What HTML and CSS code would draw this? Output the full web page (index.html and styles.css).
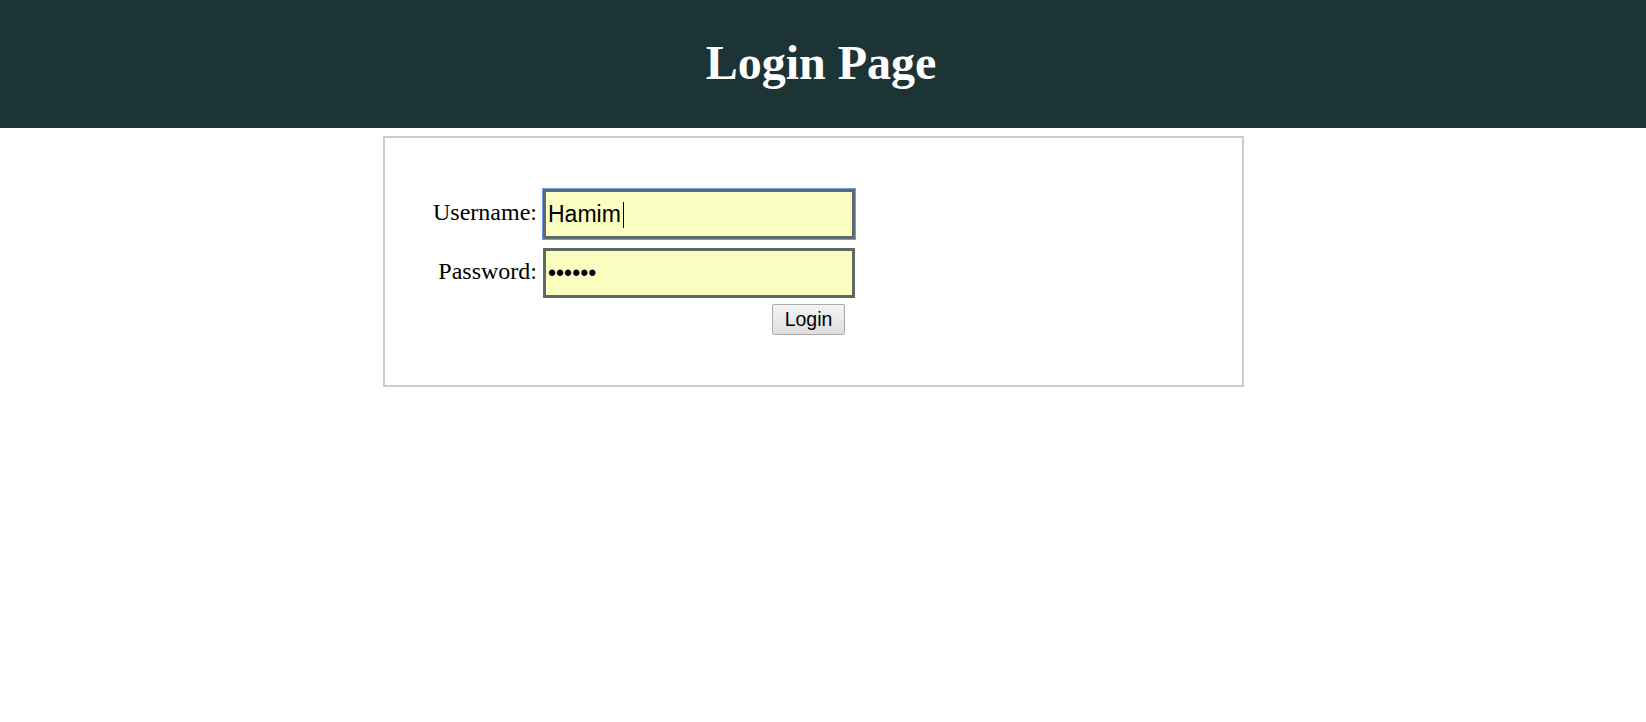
FILE: index.html
```html
<!DOCTYPE html>
<html lang="en">
<head>
<meta charset="utf-8">
<title>Login Page</title>
<link rel="stylesheet" href="styles.css">
</head>
<body>
<header class="site-header">
  <h1 class="site-title">Login Page</h1>
</header>
<main class="login-box">
  <form class="login-form" onsubmit="return false;">
    <label class="field-label" for="username">Username:</label>
    <span class="input-wrap">
      <input class="field-input field-input--focused" id="username" type="text" value="Hamim">
      <span class="fake-caret"></span>
    </span>
    <label class="field-label" for="password">Password:</label>
    <input class="field-input" id="password" type="password" value="123456">
    <div class="actions">
      <button class="login-button" type="submit">Login</button>
    </div>
  </form>
</main>
</body>
</html>
```

FILE: styles.css
```css
html, body {
  margin: 0;
  padding: 0;
  background: #ffffff;
}

body {
  font-family: "Liberation Serif", "Times New Roman", serif;
  color: #000;
}

.site-header {
  box-sizing: border-box;
  height: 128px;
  padding: 0 4px 4px 0;
  background: #1c3435;
  display: flex;
  align-items: center;
  justify-content: center;
}

.site-title {
  margin: 0;
  font-family: "Liberation Serif", "Times New Roman", serif;
  font-weight: bold;
  font-size: 48px;
  color: #ffffff;
}

.login-box {
  box-sizing: border-box;
  width: 861px;
  margin: 8px 0 0 calc(50% - 440px);
  padding: 51px 50px 50px 50px;
  border: 2px solid #cccccc;
}

.login-form {
  display: grid;
  grid-template-columns: 102px 312px;
  column-gap: 6px;
  row-gap: 9px;
  align-items: center;
}

.field-label {
  justify-self: end;
  padding-bottom: 4px;
  font-size: 24px;
  line-height: 26px;
  white-space: nowrap;
}

.input-wrap {
  position: relative;
  display: block;
  width: 312px;
  height: 50px;
}

.field-input {
  box-sizing: border-box;
  display: block;
  width: 312px;
  height: 50px;
  margin: 0;
  padding: 0 2px;
  border: 3px solid #5d6a62;
  background: #fafec0;
  font-family: "Liberation Sans", Arial, sans-serif;
  font-size: 23px;
  color: #000;
  outline: none;
  border-radius: 0;
}

.field-input--focused {
  border-color: #5b6a6e;
  box-shadow: 0 0 0 1px #6d9de6;
  caret-color: transparent;
}

.fake-caret {
  position: absolute;
  left: 80px;
  top: 13px;
  width: 1px;
  height: 26px;
  background: #000;
}

.actions {
  grid-column: 2;
  display: flex;
  justify-content: flex-end;
  padding-right: 10px;
  margin-top: -3px;
}

.login-button {
  box-sizing: border-box;
  height: 31px;
  width: 73px;
  margin: 0;
  padding: 0;
  font-family: "Liberation Sans", Arial, sans-serif;
  font-size: 19.5px;
  color: #000;
  background: linear-gradient(#f4f4f4, #dedede);
  border: 1px solid #a9a9a9;
  border-radius: 2px;
}
```
